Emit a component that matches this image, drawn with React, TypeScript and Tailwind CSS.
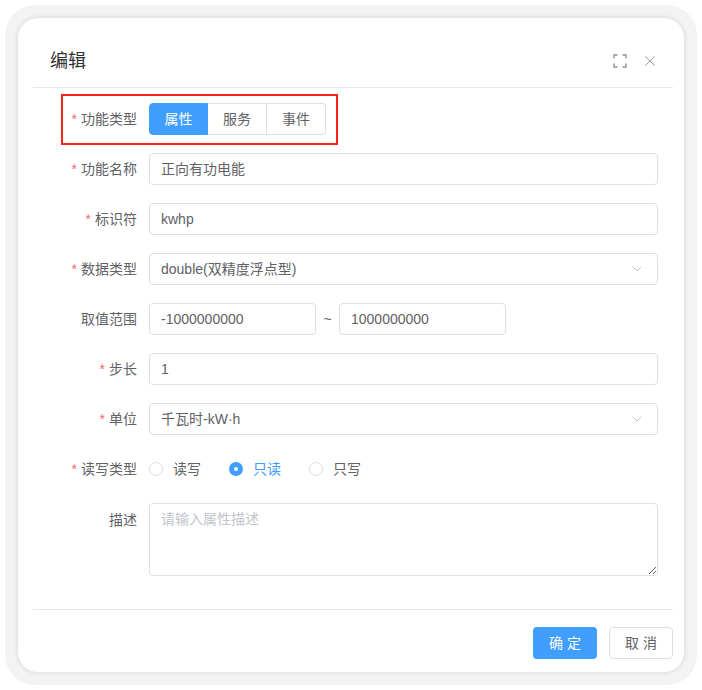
import { ChevronDown, X } from 'lucide-react'

const FONT = { fontFamily: '"Liberation Sans", "Noto Sans CJK SC", sans-serif' }

function Label({ text, required }: { text: string; required?: boolean }) {
  return (
    <div className="w-[131px] shrink-0 text-right text-[14px] text-[#606266] pr-[12px]">
      {required && <span className="text-[#f56c6c] mr-[4px]">*</span>}
      {text}
    </div>
  )
}

function Input({ value, className = '' }: { value: string; className?: string }) {
  return (
    <div
      className={`h-[32px] flex items-center px-[11px] border border-[#dcdfe6] rounded-[4px] text-[14px] text-[#606266] bg-white ${className}`}
    >
      {value}
    </div>
  )
}

function Select({ value }: { value: string }) {
  return (
    <div className="flex-1 h-[32px] flex items-center justify-between pl-[11px] pr-[12px] border border-[#dcdfe6] rounded-[4px] text-[14px] text-[#606266] bg-white">
      <span>{value}</span>
      <ChevronDown className="w-[16px] h-[16px] text-[#c0c4cc]" strokeWidth={1.5} />
    </div>
  )
}

function Radio({ label, checked }: { label: string; checked?: boolean }) {
  return (
    <div className="flex items-center gap-[10px] mr-[28px]">
      {checked ? (
        <span className="w-[14px] h-[14px] rounded-full bg-[#409eff] flex items-center justify-center">
          <span className="w-[4px] h-[4px] rounded-full bg-white" />
        </span>
      ) : (
        <span className="w-[14px] h-[14px] rounded-full border border-[#dcdfe6] bg-white" />
      )}
      <span className={`text-[14px] ${checked ? 'text-[#409eff]' : 'text-[#606266]'}`}>{label}</span>
    </div>
  )
}

function FullscreenIcon() {
  return (
    <svg width="14" height="14" viewBox="0 0 14 14" fill="none" stroke="#909399" strokeWidth="1.4">
      <path d="M1 4.5V1h3.5M9.5 1H13v3.5M13 9.5V13H9.5M4.5 13H1V9.5" />
    </svg>
  )
}

export default function App() {
  return (
    <div className="w-[702px] h-[690px] bg-white p-[5px]" style={FONT}>
      <div className="w-full h-full rounded-[30px] bg-[#f3f3f3] p-[13px]">
        <div className="relative w-full h-full bg-white rounded-[20px] shadow-[0_0_3px_2px_#e4e4e4] flex flex-col">
          {/* header */}
          <div className="flex items-center justify-between pl-[32px] pr-[25px] pt-[31px] pb-[14px]">
            <div className="text-[18px] leading-[24px] text-[#303133]">编辑</div>
            <div className="flex items-center gap-[14px]">
              <FullscreenIcon />
              <X className="w-[18px] h-[18px] text-[#909399]" strokeWidth={1.2} />
            </div>
          </div>
          <div className="ml-[15px] mr-[11px] h-px bg-[#e4e7ed]" />

          {/* form */}
          <div className="pt-[15px] pr-[26px] flex flex-col gap-[18px]">
            <div className="flex items-center h-[32px]">
              <Label text="功能类型" required />
              <div className="flex h-[32px] text-[14px]">
                <div className="w-[59px] flex items-center justify-center bg-[#409eff] text-white rounded-l-[4px] border border-[#409eff]">
                  属性
                </div>
                <div className="w-[59px] flex items-center justify-center bg-white text-[#606266] border-y border-r border-[#dcdfe6]">
                  服务
                </div>
                <div className="w-[59px] flex items-center justify-center bg-white text-[#606266] border-y border-r border-[#dcdfe6] rounded-r-[4px]">
                  事件
                </div>
              </div>
            </div>

            <div className="flex items-center">
              <Label text="功能名称" required />
              <Input value="正向有功电能" className="flex-1" />
            </div>

            <div className="flex items-center">
              <Label text="标识符" required />
              <Input value="kwhp" className="flex-1" />
            </div>

            <div className="flex items-center">
              <Label text="数据类型" required />
              <Select value="double(双精度浮点型)" />
            </div>

            <div className="flex items-center">
              <Label text="取值范围" />
              <Input value="-1000000000" className="w-[167px]" />
              <span className="w-[23px] text-center text-[14px] text-[#606266]">~</span>
              <Input value="1000000000" className="w-[167px]" />
            </div>

            <div className="flex items-center">
              <Label text="步长" required />
              <Input value="1" className="flex-1" />
            </div>

            <div className="flex items-center">
              <Label text="单位" required />
              <Select value="千瓦时-kW·h" />
            </div>

            <div className="flex items-center h-[32px]">
              <Label text="读写类型" required />
              <Radio label="读写" />
              <Radio label="只读" checked />
              <Radio label="只写" />
            </div>

            <div className="flex items-start">
              <div className="pt-[7px]">
                <Label text="描述" />
              </div>
              <textarea
                readOnly
                placeholder="请输入属性描述"
                className="flex-1 h-[73px] px-[11px] py-[5px] border border-[#dcdfe6] rounded-[4px] text-[14px] text-[#606266] placeholder:text-[#c0c4cc] outline-none"
                style={FONT}
              />
            </div>
          </div>

          <div className="mt-[33px] ml-[15px] mr-[11px] h-px bg-[#e4e7ed]" />

          {/* footer */}
          <div className="flex justify-end gap-[12px] pt-[17px] pr-[11px]">
            <button className="w-[64px] h-[32px] rounded-[4px] bg-[#409eff] text-white text-[14px] tracking-[4px] pl-[4px]">
              确定
            </button>
            <button className="w-[64px] h-[32px] rounded-[4px] bg-white border border-[#dcdfe6] text-[#606266] text-[14px] tracking-[4px] pl-[4px]">
              取消
            </button>
          </div>

          {/* annotation box */}
          <div className="absolute left-[43px] top-[76px] w-[277px] h-[51px] border-2 border-[#f2261b]" />
        </div>
      </div>
    </div>
  )
}
